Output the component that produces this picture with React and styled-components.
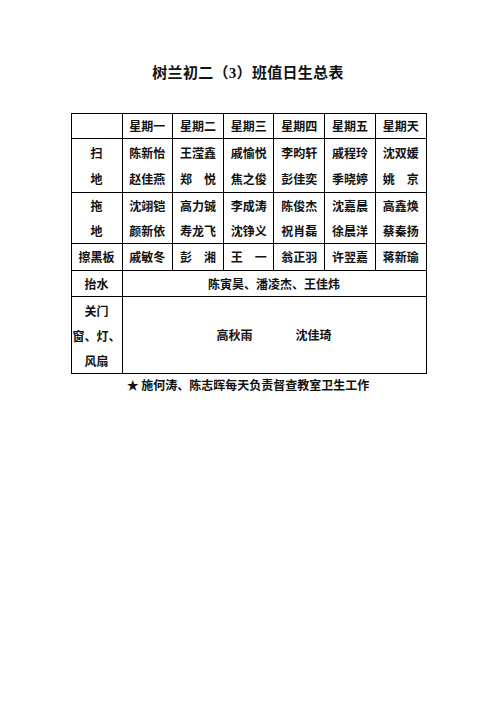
import React from 'react';
import styled, { createGlobalStyle } from 'styled-components';

const GlobalStyle = createGlobalStyle`
  html, body {
    margin: 0;
    padding: 0;
    background: #fff;
  }
  body {
    font-family: "Noto Sans CJK SC", "DejaVu Sans", sans-serif;
    color: #111;
  }
`;

const Page = styled.div`
  width: 496px;
  min-height: 702px;
  display: flex;
  flex-direction: column;
  align-items: center;
  padding-top: 64px;
  box-sizing: border-box;
`;

const Title = styled.h1`
  margin: 0;
  font-family: "Liberation Serif", "Noto Sans CJK SC", serif;
  font-size: 15px;
  line-height: 18px;
  font-weight: 700;
  letter-spacing: 0.3px;
`;

const Table = styled.table`
  margin-top: 31px;
  margin-left: 1px;
  width: 356px;
  border-collapse: collapse;
  table-layout: fixed;
`;

const Cell = styled.td`
  border: 1px solid #000;
  padding: 0;
  text-align: center;
  vertical-align: middle;
  font-size: 12px;
  font-weight: 700;
  line-height: ${(p) => p.$lh || 24}px;
  height: ${(p) => p.$h}px;
  white-space: nowrap;
`;

const Pair = styled.div`
  display: flex;
  justify-content: center;
  gap: 43px;
`;

const Note = styled.p`
  margin: 3px 0 0;
  font-size: 12px;
  line-height: 16px;
  font-weight: 700;
`;

const days = ['星期一', '星期二', '星期三', '星期四', '星期五', '星期天'];
const sweep = [
  ['陈新怡', '赵佳燕'],
  ['王滢鑫', '郑　悦'],
  ['戚愉悦', '焦之俊'],
  ['李昀轩', '彭佳奕'],
  ['戚程玲', '季晓婷'],
  ['沈双媛', '姚　京'],
];
const mop = [
  ['沈翊铠', '颜新依'],
  ['高力铖', '寿龙飞'],
  ['李成涛', '沈铮义'],
  ['陈俊杰', '祝肖磊'],
  ['沈嘉晨', '徐晨洋'],
  ['高鑫焕', '蔡秦扬'],
];
const board = ['戚敏冬', '彭　湘', '王　一', '翁正羽', '许翌嘉', '蒋新瑜'];

const TwoLine = ({ lines }) => (
  <>
    {lines[0]}
    <br />
    {lines[1]}
  </>
);

export default function App() {
  return (
    <Page>
      <GlobalStyle />
      <Title>树兰初二（3）班值日生总表</Title>
      <Table>
        <colgroup>
          <col style={{ width: 51 }} />
          {days.map((d) => (
            <col key={d} />
          ))}
        </colgroup>
        <tbody>
          <tr>
            <Cell $h={24} />
            {days.map((d) => (
              <Cell key={d} $h={24}>{d}</Cell>
            ))}
          </tr>
          <tr>
            <Cell $h={53} $lh={26}>
              <TwoLine lines={['扫', '地']} />
            </Cell>
            {sweep.map((s) => (
              <Cell key={s[0]} $h={53} $lh={26}>
                <TwoLine lines={s} />
              </Cell>
            ))}
          </tr>
          <tr>
            <Cell $h={50} $lh={25}>
              <TwoLine lines={['拖', '地']} />
            </Cell>
            {mop.map((s) => (
              <Cell key={s[0]} $h={50} $lh={25}>
                <TwoLine lines={s} />
              </Cell>
            ))}
          </tr>
          <tr>
            <Cell $h={26}>擦黑板</Cell>
            {board.map((b) => (
              <Cell key={b} $h={26}>{b}</Cell>
            ))}
          </tr>
          <tr>
            <Cell $h={25}>抬水</Cell>
            <Cell $h={25} colSpan={6}>陈寅昊、潘凌杰、王佳炜</Cell>
          </tr>
          <tr>
            <Cell $h={76} $lh={25}>
              关门
              <br />
              窗、灯、
              <br />
              风扇
            </Cell>
            <Cell $h={76} colSpan={6}>
              <Pair>
                <span>高秋雨</span>
                <span>沈佳琦</span>
              </Pair>
            </Cell>
          </tr>
        </tbody>
      </Table>
      <Note>★ 施何涛、陈志晖每天负责督查教室卫生工作</Note>
    </Page>
  );
}
